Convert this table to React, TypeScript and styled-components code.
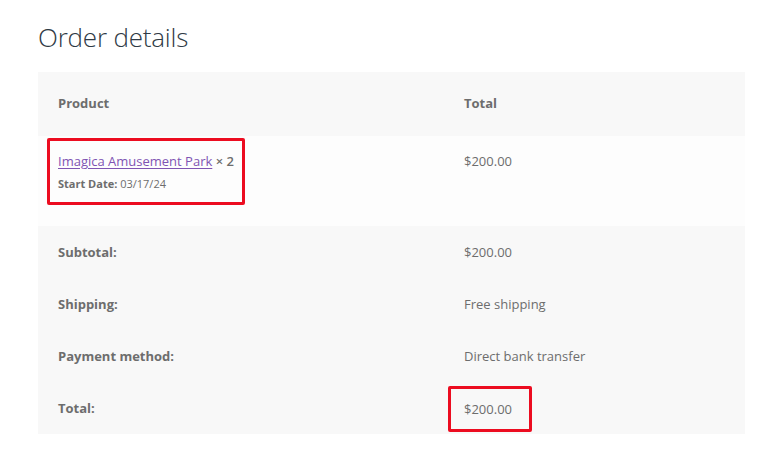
import styled, { createGlobalStyle } from "styled-components";

const GlobalStyle = createGlobalStyle`
  body {
    margin: 0;
    background: #ffffff;
    font-family: "Open Sans", "Noto Sans", sans-serif;
    color: #6d6d6d;
  }
`;

const Page = styled.div`
  padding: 18px 13px 20px 38px;
`;

const Title = styled.h2`
  margin: 0 0 16px;
  font-size: 26px;
  line-height: 38px;
  font-weight: 300;
  color: #2f3a45;
  letter-spacing: -0.2px;
`;

const Table = styled.table`
  width: 707px;
  border-collapse: collapse;
  font-size: 13px;
  line-height: 24px;
  table-layout: fixed;
`;

const HeadCell = styled.th<{ $w?: number }>`
  width: ${(p) => (p.$w ? `${p.$w}px` : "auto")};
  text-align: left;
  font-weight: 700;
  padding: 19px 20px 21px;
  background: #f8f8f8;
  color: #6d6d6d;
`;

const Row = styled.tr<{ $light?: boolean }>`
  background: ${(p) => (p.$light ? "#fdfdfd" : "#f8f8f8")};
`;

const Cell = styled.td<{ $bold?: boolean }>`
  padding: 14px 20px;
  vertical-align: top;
  font-weight: ${(p) => (p.$bold ? 700 : 400)};
  height: 24px;
`;

const ProductCell = styled.td`
  padding: 2px 20px 21px 9px;
  vertical-align: top;
`;

const PriceTop = styled.td`
  padding: 13px 20px;
  vertical-align: top;
`;

const Highlight = styled.div<{ $inline?: boolean }>`
  display: inline-block;
  border: 3px solid #ec0c20;
  border-radius: 2px;
  padding: ${(p) => (p.$inline ? "8px 17px 8px 13px" : "8px 8px 9px 8px")};
`;

const TotalCell = styled.td`
  padding: 4px 20px 2px 4px;
  vertical-align: top;
`;

const ProductLink = styled.a`
  color: #7f54b3;
  text-decoration: underline;
  text-underline-offset: 2px;
`;

const Qty = styled.strong`
  font-weight: 600;
`;

const Meta = styled.div`
  margin-top: 2px;
  font-size: 11px;
  line-height: 18px;
  strong {
    font-weight: 700;
  }
`;

const totals = [
  { label: "Subtotal:", value: "$200.00" },
  { label: "Shipping:", value: "Free shipping" },
  { label: "Payment method:", value: "Direct bank transfer" },
];

export default function App() {
  return (
    <Page>
      <GlobalStyle />
      <Title>Order details</Title>
      <Table>
        <thead>
          <tr>
            <HeadCell $w={366}>Product</HeadCell>
            <HeadCell>Total</HeadCell>
          </tr>
        </thead>
        <tbody>
          <Row $light>
            <ProductCell>
              <Highlight>
                <ProductLink href="#">Imagica Amusement Park</ProductLink>{" "}
                <Qty>× 2</Qty>
                <Meta>
                  <strong>Start Date:</strong> 03/17/24
                </Meta>
              </Highlight>
            </ProductCell>
            <PriceTop>$200.00</PriceTop>
          </Row>
        </tbody>
        <tfoot>
          {totals.map((t) => (
            <Row key={t.label}>
              <Cell $bold>{t.label}</Cell>
              <Cell>{t.value}</Cell>
            </Row>
          ))}
          <Row>
            <Cell $bold>Total:</Cell>
            <TotalCell>
              <Highlight $inline>$200.00</Highlight>
            </TotalCell>
          </Row>
        </tfoot>
      </Table>
    </Page>
  );
}
